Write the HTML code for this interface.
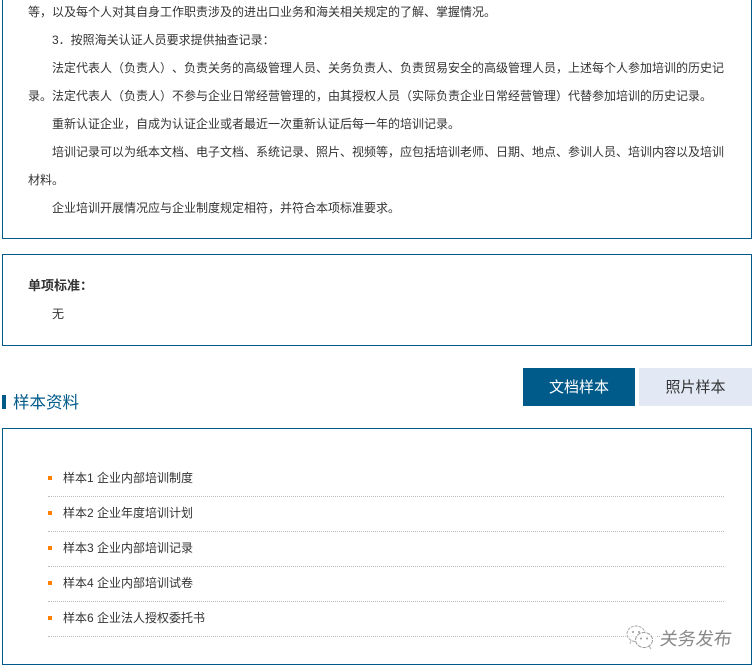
<!DOCTYPE html>
<html lang="zh-CN">
<head>
<meta charset="utf-8">
<style>
html,body{margin:0;padding:0;background:#fff;}
body{width:756px;height:671px;position:relative;overflow:hidden;font-family:"Liberation Sans","Noto Sans CJK SC",sans-serif;color:#333;font-size:12px;text-spacing-trim:space-all;}
.box{position:absolute;left:2px;width:748px;border:1px solid #005a8a;box-sizing:content-box;}
.l{position:absolute;white-space:nowrap;line-height:28px;height:28px;font-size:12px;color:#333;}
.tab{position:absolute;top:368px;height:38px;line-height:39px;text-align:center;font-size:15px;}
.dot{position:absolute;left:48px;width:676px;height:0;border-top:1px dotted #bbb;}
.b{position:absolute;left:48px;width:4px;height:4px;background:#ff8000;}
</style>
</head>
<body>
<div class="box" style="top:-20px;height:257px;"></div>
<div class="l" style="left:28px;top:-2px;">等，以及每个人对其自身工作职责涉及的进出口业务和海关相关规定的了解、掌握情况。</div>
<div class="l" style="left:52px;top:26px;">3．按照海关认证人员要求提供抽查记录：</div>
<div class="l" style="left:52px;top:54px;">法定代表人（负责人）、负责关务的高级管理人员、关务负责人、负责贸易安全的高级管理人员，上述每个人参加培训的历史记</div>
<div class="l" style="left:28px;top:82px;">录。法定代表人（负责人）不参与企业日常经营管理的，由其授权人员（实际负责企业日常经营管理）代替参加培训的历史记录。</div>
<div class="l" style="left:52px;top:110px;">重新认证企业，自成为认证企业或者最近一次重新认证后每一年的培训记录。</div>
<div class="l" style="left:52px;top:138px;">培训记录可以为纸本文档、电子文档、系统记录、照片、视频等，应包括培训老师、日期、地点、参训人员、培训内容以及培训</div>
<div class="l" style="left:28px;top:166px;">材料。</div>
<div class="l" style="left:52px;top:194px;">企业培训开展情况应与企业制度规定相符，并符合本项标准要求。</div>

<div class="box" style="top:254px;height:90px;"></div>
<div class="l" style="left:28px;top:272px;font-weight:bold;font-size:13px;">单项标准：</div>
<div class="l" style="left:52px;top:300px;">无</div>

<div style="position:absolute;left:2px;top:395px;width:4px;height:14px;background:#005a8a;"></div>
<div style="position:absolute;left:13px;top:391px;font-size:16.5px;line-height:24px;color:#005a8a;white-space:nowrap;">样本资料</div>
<div class="tab" style="left:523px;width:112px;background:#005a8a;color:#fff;">文档样本</div>
<div class="tab" style="left:639px;width:113px;background:#e2e9f5;color:#333;">照片样本</div>

<div class="box" style="top:428px;height:235px;"></div>
<div class="b" style="top:476px;"></div><div class="l" style="left:63px;top:464px;">样本1 企业内部培训制度</div><div class="dot" style="top:496px;"></div>
<div class="b" style="top:511px;"></div><div class="l" style="left:63px;top:499px;">样本2 企业年度培训计划</div><div class="dot" style="top:531px;"></div>
<div class="b" style="top:546px;"></div><div class="l" style="left:63px;top:534px;">样本3 企业内部培训记录</div><div class="dot" style="top:566px;"></div>
<div class="b" style="top:581px;"></div><div class="l" style="left:63px;top:569px;">样本4 企业内部培训试卷</div><div class="dot" style="top:601px;"></div>
<div class="b" style="top:616px;"></div><div class="l" style="left:63px;top:604px;">样本6 企业法人授权委托书</div><div class="dot" style="top:636px;"></div>

<svg style="position:absolute;left:624px;top:624px;" width="32" height="28" viewBox="0 0 32 28">
<rect x="2" y="0" width="30" height="28" fill="#fff" fill-opacity=".8"/>
<path d="M11 17.500C6.500 17 3 13.800 3 9.800 3 5.500 7 2 12 2c4.300 0 7.900 2.600 8.800 6.100" fill="none" stroke="#aaa" stroke-width="1" stroke-dasharray="3 1"/>
<path d="M6 20l1-4" fill="none" stroke="#bbb" stroke-width="1"/>
<ellipse cx="20" cy="16" rx="8.500" ry="7.500" fill="none" stroke="#999" stroke-width="1" stroke-dasharray="4 1"/>
<path d="M25 22l2 3" fill="none" stroke="#aaa" stroke-width="1"/>
<circle cx="9" cy="8" r="1" fill="#999"/><circle cx="15" cy="8" r="1" fill="#999"/>
<circle cx="17" cy="14.500" r="1" fill="#999"/><circle cx="23" cy="14.500" r="1" fill="#999"/>
</svg>
<div style="position:absolute;left:660px;top:628px;font-size:18px;line-height:22px;letter-spacing:-.1px;color:#888;white-space:nowrap;background:#fff;transform:skewX(-7deg);">关务发布</div>
</body>
</html>
